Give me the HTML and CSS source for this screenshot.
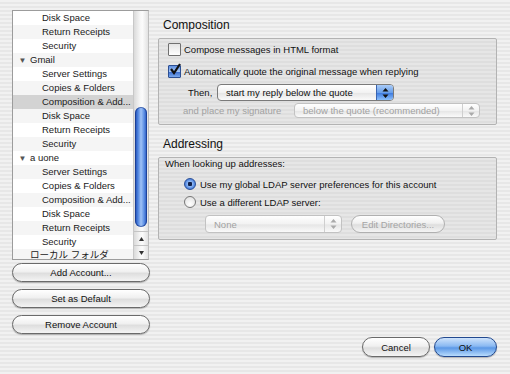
FILE: index.html
```html
<!DOCTYPE html>
<html lang="en">
<head>
    <meta charset="UTF-8">
    <title>Account Settings</title>
    <link rel="stylesheet" href="styles.css">
</head>
<body>
    <div class="dialog">
        <div class="sidebar">
            <div class="tree">
                <ul class="tree-list">
                    <li class="row child">Disk Space</li>
                    <li class="row child alt">Return Receipts</li>
                    <li class="row child">Security</li>
                    <li class="row account alt"><span class="twisty">&#9660;</span>Gmail</li>
                    <li class="row child">Server Settings</li>
                    <li class="row child alt">Copies &amp; Folders</li>
                    <li class="row child selected">Composition &amp; Add...</li>
                    <li class="row child alt">Disk Space</li>
                    <li class="row child">Return Receipts</li>
                    <li class="row child alt">Security</li>
                    <li class="row account"><span class="twisty">&#9660;</span>a uone</li>
                    <li class="row child alt">Server Settings</li>
                    <li class="row child">Copies &amp; Folders</li>
                    <li class="row child alt">Composition &amp; Add...</li>
                    <li class="row child">Disk Space</li>
                    <li class="row child alt">Return Receipts</li>
                    <li class="row child">Security</li>
                    <li class="row account local alt">ローカル フォルダ</li>
                </ul>
                <div class="scrollbar">
                    <div class="track"><div class="thumb"></div></div>
                    <div class="arrow-btn">
                        <svg width="5" height="4" viewBox="0 0 5 4"><path d="M2.5 0L5 4H0Z" fill="#333"/></svg>
                    </div>
                    <div class="arrow-btn">
                        <svg width="5" height="4" viewBox="0 0 5 4"><path d="M0 0H5L2.5 4Z" fill="#333"/></svg>
                    </div>
                </div>
            </div>
            <button class="aqua-btn side-btn first">Add Account...</button>
            <button class="aqua-btn side-btn">Set as Default</button>
            <button class="aqua-btn side-btn">Remove Account</button>
        </div>

        <div class="main">
            <h2 class="section-title">Composition</h2>
            <div class="group composition">
                <div class="check-row">
                    <span class="checkbox"></span>
                    <span>Compose messages in HTML format</span>
                </div>
                <div class="check-row second">
                    <span class="checkbox checked">
                        <svg width="14" height="14" viewBox="0 0 14 14"><path d="M3 7L6 11L12 2" fill="none" stroke="#111" stroke-width="2.2"/></svg>
                    </span>
                    <span>Automatically quote the original message when replying</span>
                </div>
                <div class="field-row then-row">
                    <span class="field-label">Then,</span>
                    <span class="popup reply-popup">
                        <span class="popup-text">start my reply below the quote</span>
                        <span class="popup-arrows">
                            <svg width="7" height="10" viewBox="0 0 7 10"><path d="M3.5 0L6.5 3.5H0.5Z M3.5 10L0.5 6.5H6.5Z" fill="#111"/></svg>
                        </span>
                    </span>
                </div>
                <div class="field-row sig-row disabled">
                    <span class="field-label">and place my signature</span>
                    <span class="popup sig-popup">
                        <span class="popup-text">below the quote (recommended)</span>
                        <span class="popup-arrows">
                            <svg width="7" height="10" viewBox="0 0 7 10"><path d="M3.5 0L6.5 3.5H0.5Z M3.5 10L0.5 6.5H6.5Z" fill="#aaa"/></svg>
                        </span>
                    </span>
                </div>
            </div>

            <h2 class="section-title">Addressing</h2>
            <div class="group addressing">
                <div class="group-note">When looking up addresses:</div>
                <div class="radio-row first">
                    <span class="radio on"></span>
                    <span>Use my global LDAP server preferences for this account</span>
                </div>
                <div class="radio-row">
                    <span class="radio"></span>
                    <span>Use a different LDAP server:</span>
                </div>
                <div class="field-row ldap-row disabled">
                    <span class="popup none-popup">
                        <span class="popup-text">None</span>
                        <span class="popup-arrows">
                            <svg width="7" height="10" viewBox="0 0 7 10"><path d="M3.5 0L6.5 3.5H0.5Z M3.5 10L0.5 6.5H6.5Z" fill="#aaa"/></svg>
                        </span>
                    </span>
                    <button class="aqua-btn edit-btn" disabled>Edit Directories...</button>
                </div>
            </div>

            <div class="footer">
                <button class="aqua-btn cancel-btn">Cancel</button>
                <button class="aqua-btn default-btn">OK</button>
            </div>
        </div>
    </div>
</body>
</html>
```

FILE: styles.css
```css
body {
    margin: 0;
    width: 510px;
    height: 374px;
    overflow: hidden;
    font-family: 'Liberation Sans', Arial, 'Noto Sans CJK JP', sans-serif;
    font-size: 9.5px;
    color: #111;
    background: repeating-linear-gradient(to bottom, #f1f1f1 0, #f1f1f1 2px, #e7e7e7 2px, #e7e7e7 4px);
}
.dialog {
    display: flex;
    gap: 8px;
    height: 374px;
    box-sizing: border-box;
    padding: 10px 13px 0 12px;
}

/* left column */
.sidebar {
    width: 138px;
    display: flex;
    flex-direction: column;
}
.tree {
    width: 137px;
    height: 250px;
    box-sizing: border-box;
    display: flex;
    background: #fff;
    border: 1px solid #9c9c9c;
    border-right-color: #bdbdbd;
    overflow: hidden;
}
.tree-list {
    flex: 1;
    list-style: none;
    margin: 0;
    padding: 0;
    overflow: hidden;
}
.row {
    height: 14px;
    line-height: 14px;
    white-space: nowrap;
    overflow: hidden;
    color: #1a1a1a;
}
.row.alt {
    background: #f5f5f5;
}
.row.child {
    padding-left: 29px;
}
.row.account {
    padding-left: 2px;
}
.row.account.local {
    padding-left: 17px;
    height: 10px;
    line-height: 11px;
}
.row.selected {
    background: #d3d3d3;
}
.twisty {
    display: inline-block;
    width: 15px;
    font-size: 8px;
    color: #555;
    text-align: center;
}
.scrollbar {
    width: 14px;
    display: flex;
    flex-direction: column;
    background: linear-gradient(to right, #dadada, #f7f7f7 45%, #fbfbfb 60%, #e2e2e2);
    border-left: 1px solid #c8c8c8;
}
.track {
    flex: 1;
    border-radius: 7px 7px 0 0;
    padding-top: 96px;
}
.thumb {
    width: 12px;
    height: 120px;
    margin-left: 1px;
    border-radius: 6px;
    background: linear-gradient(to right, #1a47ad, #4f84e0 25%, #9fc2f6 50%, #5f91e5 75%, #1f4fba);
    box-shadow: inset 0 0 0 1px rgba(20, 50, 130, 0.6);
}
.arrow-btn {
    height: 13px;
    display: flex;
    align-items: center;
    justify-content: center;
    border-top: 1px solid #c4c4c4;
}
.aqua-btn {
    font-family: inherit;
    font-size: 9.5px;
    color: #111;
    border: 1px solid #6a6a6a;
    border-radius: 10px;
    background: linear-gradient(to bottom, #ffffff, #f0f0f0 45%, #dedede 55%, #f4f4f4);
    box-shadow: 0 1px 1px rgba(0, 0, 0, 0.25);
    padding: 0;
}
.side-btn {
    height: 19px;
    margin-top: 7px;
}
.side-btn.first {
    margin-top: 3px;
}

/* right column */
.main {
    flex: 1;
    display: flex;
    flex-direction: column;
}
.section-title {
    margin: 7px 0 5px 5px;
    font-size: 12px;
    font-weight: normal;
    line-height: 16px;
}
.group.composition + .section-title {
    margin-top: 11px;
}
.group {
    border: 1px solid #b3b3b3;
    border-radius: 2px;
    background: repeating-linear-gradient(to bottom, #e6e6e6 0, #e6e6e6 2px, #dedede 2px, #dedede 4px);
}
.group.composition {
    height: 87px;
    box-sizing: border-box;
    padding: 3px 0 0 9px;
}
.group.addressing {
    height: 83px;
    box-sizing: border-box;
    padding: 0 0 0 6px;
}
.check-row,
.radio-row {
    display: flex;
    align-items: center;
    gap: 3px;
    height: 15px;
}
.check-row.second {
    margin-top: 7px;
}
.checkbox {
    position: relative;
    width: 11px;
    height: 11px;
    border: 1px solid #707070;
    background: linear-gradient(to bottom, #e4e4e4, #ffffff);
    border-radius: 1px;
}
.checkbox.checked {
    background: linear-gradient(to bottom, #5d8ee0, #a5c6f5 50%, #3d6fd0 55%, #7aa8ec);
    border-color: #2c4f93;
}
.checkbox svg {
    position: absolute;
    left: -1px;
    top: -4px;
}
.field-row {
    display: flex;
    align-items: center;
}
.field-row.disabled {
    color: #a2a2a2;
}
.then-row {
    margin-top: 5px;
    padding-left: 20px;
}
.then-row .field-label {
    width: 29px;
}
.sig-row {
    margin-top: 2px;
    padding-left: 15px;
}
.sig-row .field-label {
    width: 111px;
}
.popup {
    display: flex;
    align-items: center;
    box-sizing: border-box;
    border: 1px solid #7a7a7a;
    border-radius: 4px;
    background: linear-gradient(to bottom, #ffffff, #f2f2f2 50%, #e6e6e6 55%, #fafafa);
    overflow: hidden;
}
.popup-text {
    flex: 1;
    padding-left: 8px;
    white-space: nowrap;
}
.popup-arrows {
    width: 16px;
    align-self: stretch;
    display: flex;
    align-items: center;
    justify-content: center;
}
.reply-popup {
    width: 177px;
    height: 17px;
}
.reply-popup .popup-arrows {
    background: linear-gradient(to bottom, #a9cbf7, #6aa0ea 50%, #3f7ce0 55%, #8cc0fb);
    border-left: 1px solid #3a64b0;
}
.sig-popup {
    width: 186px;
    height: 15px;
    border-color: #c2c2c2;
}
.disabled .popup-arrows {
    border-left: 1px solid #cfcfcf;
}
.group-note {
    height: 12px;
    line-height: 12px;
}
.radio-row {
    padding-left: 19px;
    height: 16px;
    gap: 4px;
    margin-top: 2px;
}
.radio-row.first {
    margin-top: 6px;
}
.radio {
    width: 10px;
    height: 10px;
    border-radius: 50%;
    border: 1px solid #777;
    background: radial-gradient(circle at 50% 70%, #ffffff, #dcdcdc);
    box-sizing: content-box;
}
.radio.on {
    border-color: #2a4f97;
    background: radial-gradient(circle, #10204a 0, #10204a 2px, #8cb6f3 2.5px, #4a80dc 5px);
}
.ldap-row {
    margin-top: 5px;
    padding-left: 40px;
    gap: 9px;
}
.none-popup {
    width: 137px;
    height: 18px;
    border-color: #c2c2c2;
}
.edit-btn {
    width: 94px;
    height: 18px;
    color: #a5a5a5;
    border-color: #b0b0b0;
    box-shadow: none;
}
.footer {
    margin-top: auto;
    margin-bottom: 17px;
    display: flex;
    justify-content: flex-end;
    gap: 4px;
}
.cancel-btn {
    width: 68px;
    height: 20px;
}
.default-btn {
    width: 63px;
    height: 20px;
    border-color: #22498f;
    background: linear-gradient(to bottom, #cfe3fb, #8ab9f2 45%, #5b98e6 55%, #b9dcfd);
}
```
